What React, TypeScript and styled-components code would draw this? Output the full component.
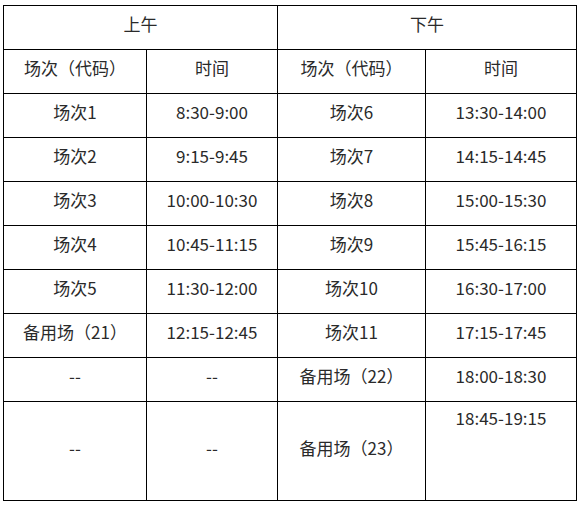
import React from 'react';
import styled, { createGlobalStyle } from 'styled-components';

const GlobalStyle = createGlobalStyle`
  html, body {
    margin: 0;
    padding: 0;
    background: #fff;
  }
  body {
    font-family: 'Noto Sans CJK SC', 'Noto Sans', sans-serif;
  }
`;

const COLS = [143, 131, 148, 151];

type Slot = { name: string; time: string };

const morning: Slot[] = [
  { name: '场次1', time: '8:30-9:00' },
  { name: '场次2', time: '9:15-9:45' },
  { name: '场次3', time: '10:00-10:30' },
  { name: '场次4', time: '10:45-11:15' },
  { name: '场次5', time: '11:30-12:00' },
  { name: '备用场（21）', time: '12:15-12:45' },
  { name: '--', time: '--' },
];

const afternoon: Slot[] = [
  { name: '场次6', time: '13:30-14:00' },
  { name: '场次7', time: '14:15-14:45' },
  { name: '场次8', time: '15:00-15:30' },
  { name: '场次9', time: '15:45-16:15' },
  { name: '场次10', time: '16:30-17:00' },
  { name: '场次11', time: '17:15-17:45' },
  { name: '备用场（22）', time: '18:00-18:30' },
];

export default function App() {
  return (
    <>
      <GlobalStyle />
      <Page>
        <Schedule>
          <colgroup>
            {COLS.map((w, i) => (
              <col key={i} style={{ width: w }} />
            ))}
          </colgroup>
          <tbody>
            <Row>
              <Cell colSpan={2}>上午</Cell>
              <Cell colSpan={2}>下午</Cell>
            </Row>
            <Row>
              <Cell>场次（代码）</Cell>
              <Cell>时间</Cell>
              <Cell>场次（代码）</Cell>
              <Cell>时间</Cell>
            </Row>
            {morning.map((m, i) => (
              <Row key={i}>
                <Cell>{m.name}</Cell>
                <Cell>{m.time}</Cell>
                <Cell>{afternoon[i].name}</Cell>
                <Cell>{afternoon[i].time}</Cell>
              </Row>
            ))}
            <Row $tall>
              <Cell>--</Cell>
              <Cell>--</Cell>
              <Cell>备用场（23）</Cell>
              <Cell $top>18:45-19:15</Cell>
            </Row>
          </tbody>
        </Schedule>
      </Page>
    </>
  );
}

const Page = styled.div`
  padding: 5px 0 0 3px;
`;

const Schedule = styled.table`
  border-collapse: collapse;
  table-layout: fixed;
  width: 573px;
  color: #2a2a2a;
  font-size: 17px;
`;

const Row = styled.tr<{ $tall?: boolean }>`
  height: ${(p) => (p.$tall ? 99 : 44)}px;
`;

const Cell = styled.td<{ $top?: boolean }>`
  border: 1px solid #000;
  text-align: center;
  vertical-align: ${(p) => (p.$top ? 'top' : 'middle')};
  padding: ${(p) => (p.$top ? '4px 0 0' : '0 0 7px')};
  line-height: 24px;
  white-space: nowrap;
`;
